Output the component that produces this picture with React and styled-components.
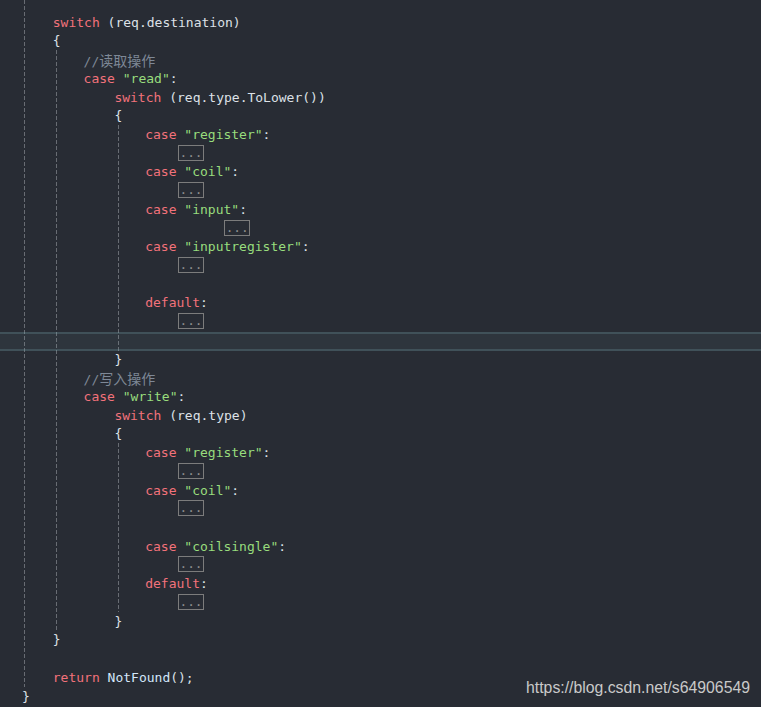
import React from 'react';
import styled, { createGlobalStyle } from 'styled-components';

const GlobalStyle = createGlobalStyle`
  html, body {
    margin: 0;
    padding: 0;
    background: #282c34;
  }
  body {
    width: 761px;
    height: 707px;
    overflow: hidden;
  }
`;

const Editor = styled.div`
  position: relative;
  width: 761px;
  height: 707px;
  background: #282c34;
  font-family: "DejaVu Sans Mono", "Liberation Mono", monospace;
  font-size: 13px;
  color: #dde1e7;
  overflow: hidden;
`;

// indent guide drawn as a repeating dashed background at a fixed x
const Block = styled.div`
  background-image: linear-gradient(to bottom, #686c73 4px, transparent 4px);
  background-size: 1px 6px;
  background-repeat: repeat-y;
  background-position: ${p => p.$guide}px 0;
  padding-top: ${p => p.$top || 0}px;
`;

// one space of indentation is 7.7px in the editor
const Line = styled.div`
  box-sizing: border-box;
  height: 18.72px;
  line-height: 20px;
  padding-left: ${p => 22 + (p.$indent || 0) * 7.7}px;
  white-space: pre;
`;

const CurrentLine = styled(Line)`
  background: rgba(120, 170, 180, 0.075);
  border-top: 2px solid rgba(120, 170, 180, 0.24);
  border-bottom: 2px solid rgba(120, 170, 180, 0.24);
  margin-top: 1px;
  margin-bottom: -1px;
`;

const Kw = styled.span`
  color: #f2727b;
`;

const Str = styled.span`
  color: #98dd7d;
`;

const Fn = styled.span`
  color: #d3e7fb;
`;

const Comment = styled.span`
  color: #7e8896;
`;

const Cjk = styled.span`
  font-family: "Noto Sans CJK SC", sans-serif;
  font-size: 14px;
`;

const Fold = styled.span`
  display: inline-block;
  box-sizing: border-box;
  width: 26px;
  height: 16px;
  margin-left: 2px;
  margin-top: 1px;
  vertical-align: top;
  border: 1px solid #7c7c7c;
  color: #8c8c8c;
  font-size: 12.8px;
  line-height: 14px;
  text-align: center;
  overflow: hidden;
`;

const Watermark = styled.div`
  position: absolute;
  right: 11px;
  bottom: 10px;
  font-family: "Liberation Sans", Arial, sans-serif;
  font-size: 15.8px;
  color: #c9c9c9;
`;

const Case = ({ indent, label }) => (
  <Line $indent={indent}>
    <Kw>case</Kw> <Str>"{label}"</Str>:
  </Line>
);

const Folded = ({ indent }) => (
  <Line $indent={indent}>
    <Fold>...</Fold>
  </Line>
);

export default function App() {
  return (
    <>
      <GlobalStyle />
      <Editor>
        <Block $guide={24} $top={12.64}>
          <Line $indent={4}>
            <Kw>switch</Kw> (req.destination)
          </Line>
          <Line $indent={4}>{'{'}</Line>
          <Block $guide={56}>
            <Line $indent={8}>
              <Comment>//<Cjk>读取操作</Cjk></Comment>
            </Line>
            <Case indent={8} label="read" />
            <Line $indent={12}>
              <Kw>switch</Kw> (req.type.ToLower())
            </Line>
            <Line $indent={12}>{'{'}</Line>
            <Block $guide={118}>
              <Case indent={16} label="register" />
              <Folded indent={20} />
              <Case indent={16} label="coil" />
              <Folded indent={20} />
              <Case indent={16} label="input" />
              <Folded indent={26} />
              <Case indent={16} label="inputregister" />
              <Folded indent={20} />
              <Line />
              <Line $indent={16}>
                <Kw>default</Kw>:
              </Line>
              <Folded indent={20} />
              <CurrentLine />
            </Block>
            <Line $indent={12}>{'}'}</Line>
            <Line $indent={8}>
              <Comment>//<Cjk>写入操作</Cjk></Comment>
            </Line>
            <Case indent={8} label="write" />
            <Line $indent={12}>
              <Kw>switch</Kw> (req.type)
            </Line>
            <Line $indent={12}>{'{'}</Line>
            <Block $guide={118}>
              <Case indent={16} label="register" />
              <Folded indent={20} />
              <Case indent={16} label="coil" />
              <Folded indent={20} />
              <Line />
              <Case indent={16} label="coilsingle" />
              <Folded indent={20} />
              <Line $indent={16}>
                <Kw>default</Kw>:
              </Line>
              <Folded indent={20} />
            </Block>
            <Line $indent={12}>{'}'}</Line>
          </Block>
          <Line $indent={4}>{'}'}</Line>
          <Line />
          <Line $indent={4}>
            <Kw>return</Kw> <Fn>NotFound</Fn>();
          </Line>
        </Block>
        <Line>{'}'}</Line>
        <Watermark>https://blog.csdn.net/s64906549</Watermark>
      </Editor>
    </>
  );
}
